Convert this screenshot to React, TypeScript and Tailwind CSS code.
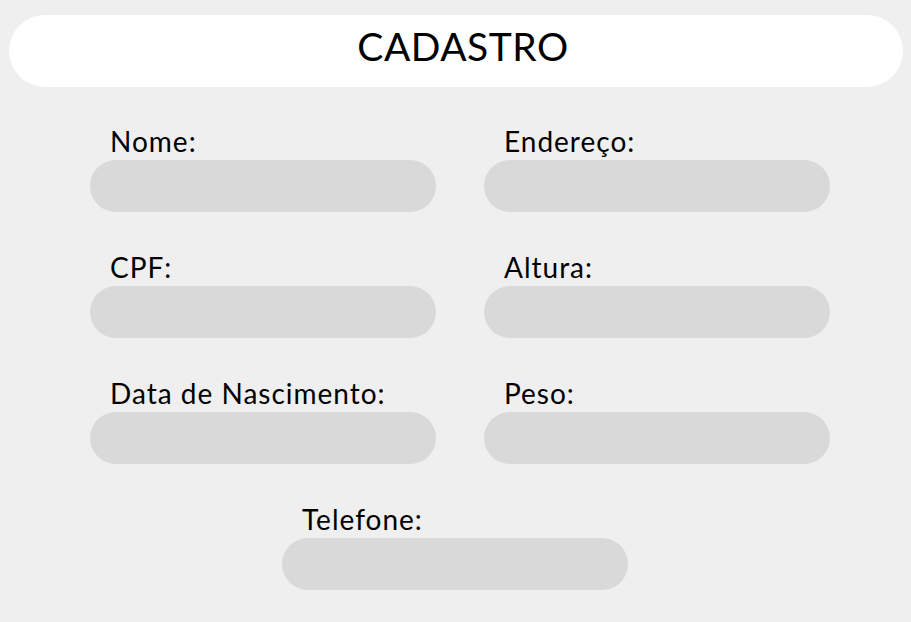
const FIELDS = [
  "Nome:",
  "Endereço:",
  "CPF:",
  "Altura:",
  "Data de Nascimento:",
  "Peso:",
];

function Field({ label }: { label: string }) {
  return (
    <div className="flex w-[346px] flex-col">
      <label className="block pl-[20px] pb-[2px] pt-[1px] text-[28px] leading-[34px] tracking-[1px] text-black">
        {label}
      </label>
      <input
        type="text"
        className="h-[52px] w-full rounded-full border-0 bg-[#d9d9d9] px-5 outline-none"
      />
    </div>
  );
}

export default function App() {
  return (
    <div
      className="min-h-screen bg-[#efefef] pt-[15px]"
      style={{ fontFamily: "Lato, 'Open Sans', sans-serif" }}
    >
      <header className="ml-[9px] mr-[8px] flex h-[72px] items-center justify-center rounded-full bg-white pb-[10px] pl-[14px]">
        <h1 className="text-[39px] leading-[46px] font-normal tracking-[0.5px] text-black">CADASTRO</h1>
      </header>

      <div className="ml-[90px] mt-[36px] w-[740px]">
        <div className="grid grid-cols-2 gap-x-[48px] gap-y-[37px]">
          {FIELDS.map((f) => (
            <Field key={f} label={f} />
          ))}
        </div>
        <div className="mt-[37px] pl-[192px]">
          <Field label="Telefone:" />
        </div>
      </div>
    </div>
  );
}
